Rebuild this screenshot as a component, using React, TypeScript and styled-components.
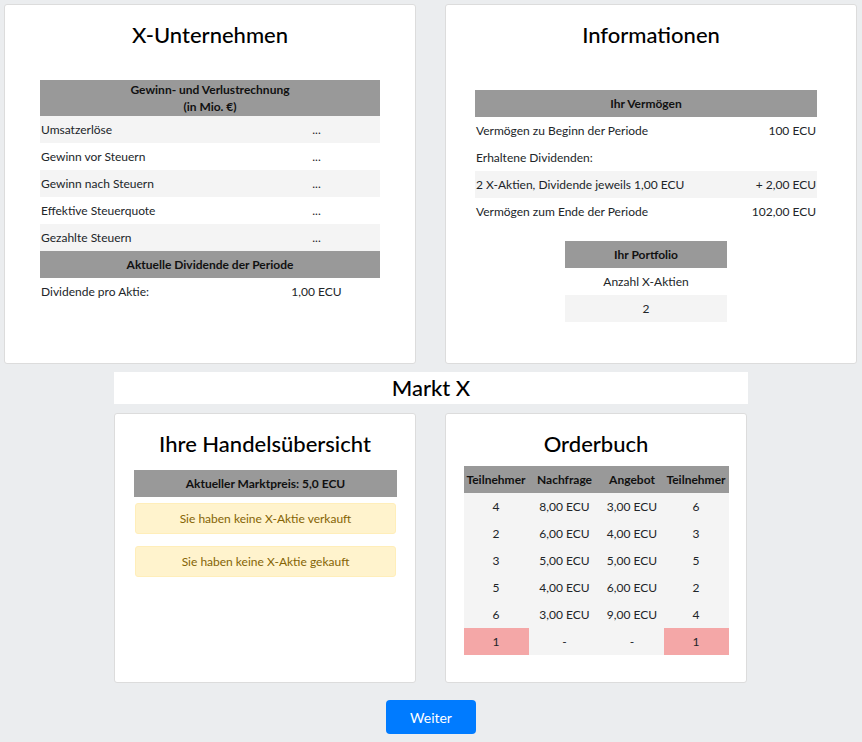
import styled, { createGlobalStyle } from "styled-components";

const GlobalStyle = createGlobalStyle`
  body {
    margin: 0;
    background: #ebedef;
    font-family: Lato, "Open Sans", sans-serif;
    font-size: 12px;
    color: #212529;
  }
`;

const orders = [
  { buyer: "4", bid: "8,00 ECU", ask: "3,00 ECU", seller: "6" },
  { buyer: "2", bid: "6,00 ECU", ask: "4,00 ECU", seller: "3" },
  { buyer: "3", bid: "5,00 ECU", ask: "5,00 ECU", seller: "5" },
  { buyer: "5", bid: "4,00 ECU", ask: "6,00 ECU", seller: "2" },
  { buyer: "6", bid: "3,00 ECU", ask: "9,00 ECU", seller: "4" },
];

const pnl = [
  "Umsatzerlöse",
  "Gewinn vor Steuern",
  "Gewinn nach Steuern",
  "Effektive Steuerquote",
  "Gezahlte Steuern",
];

export default function App() {
  return (
    <Page>
      <GlobalStyle />
      <TopRow>
        <Card $height={360}>
          <CardTitle>X-Unternehmen</CardTitle>
          <DataTable $width={340} $top={32}>
            <colgroup>
              <Col />
              <Col $width={127} />
            </colgroup>
            <tbody>
              <tr>
                <HeadCell colSpan={2} $tall>
                  Gewinn- und Verlustrechnung
                  <br />
                  (in Mio. €)
                </HeadCell>
              </tr>
              {pnl.map((label, i) => (
                <Row key={label} $shaded={i % 2 === 0}>
                  <Cell>{label}</Cell>
                  <Cell $align="center">...</Cell>
                </Row>
              ))}
              <tr>
                <HeadCell colSpan={2}>Aktuelle Dividende der Periode</HeadCell>
              </tr>
              <Row>
                <Cell>Dividende pro Aktie:</Cell>
                <Cell $align="center">1,00 ECU</Cell>
              </Row>
            </tbody>
          </DataTable>
        </Card>

        <Card $height={360}>
          <CardTitle>Informationen</CardTitle>
          <InfoBody>
            <DataTable $width={342} $top={42}>
              <tbody>
                <tr>
                  <HeadCell colSpan={2}>Ihr Vermögen</HeadCell>
                </tr>
                <Row>
                  <Cell>Vermögen zu Beginn der Periode</Cell>
                  <Cell $align="right">100 ECU</Cell>
                </Row>
                <Row>
                  <Cell>Erhaltene Dividenden:</Cell>
                  <Cell />
                </Row>
                <Row $shaded>
                  <Cell>2 X-Aktien, Dividende jeweils 1,00 ECU</Cell>
                  <Cell $align="right">+ 2,00 ECU</Cell>
                </Row>
                <Row>
                  <Cell>Vermögen zum Ende der Periode</Cell>
                  <Cell $align="right">102,00 ECU</Cell>
                </Row>
              </tbody>
            </DataTable>
            <DataTable $width={162} $top={16}>
              <tbody>
                <tr>
                  <HeadCell>Ihr Portfolio</HeadCell>
                </tr>
                <Row>
                  <Cell $align="center">Anzahl X-Aktien</Cell>
                </Row>
                <Row $shaded>
                  <Cell $align="center">2</Cell>
                </Row>
              </tbody>
            </DataTable>
          </InfoBody>
        </Card>
      </TopRow>

      <Market>
        <MarketBanner>Markt X</MarketBanner>
        <BottomRow>
          <Card $height={270}>
            <CardTitle>Ihre Handelsübersicht</CardTitle>
            <TradeBody>
              <PriceBar>Aktueller Marktpreis: 5,0 ECU</PriceBar>
              <Alert>Sie haben keine X-Aktie verkauft</Alert>
              <Alert>Sie haben keine X-Aktie gekauft</Alert>
            </TradeBody>
          </Card>

          <Card $height={270}>
            <CardTitle>Orderbuch</CardTitle>
            <DataTable $width={265} $top={9}>
              <colgroup>
                <Col $width={65} />
                <Col $width={72} />
                <Col $width={63} />
                <Col $width={65} />
              </colgroup>
              <thead>
                <tr>
                  <HeadCell>Teilnehmer</HeadCell>
                  <HeadCell>Nachfrage</HeadCell>
                  <HeadCell>Angebot</HeadCell>
                  <HeadCell>Teilnehmer</HeadCell>
                </tr>
              </thead>
              <tbody>
                {orders.map((o) => (
                  <Row key={o.buyer} $shaded>
                    <Cell $align="center">{o.buyer}</Cell>
                    <Cell $align="center">{o.bid}</Cell>
                    <Cell $align="center">{o.ask}</Cell>
                    <Cell $align="center">{o.seller}</Cell>
                  </Row>
                ))}
                <Row $shaded>
                  <Cell $align="center" $own>
                    1
                  </Cell>
                  <Cell $align="center">-</Cell>
                  <Cell $align="center">-</Cell>
                  <Cell $align="center" $own>
                    1
                  </Cell>
                </Row>
              </tbody>
            </DataTable>
          </Card>
        </BottomRow>
      </Market>

      <Footer>
        <NextButton type="button">Weiter</NextButton>
      </Footer>
    </Page>
  );
}

const Page = styled.div`
  padding: 4px 4px 8px;
  display: flex;
  flex-direction: column;
`;

const TopRow = styled.div`
  display: grid;
  grid-template-columns: 412px 412px;
  column-gap: 29px;
`;

const Card = styled.div<{ $height: number }>`
  box-sizing: border-box;
  height: ${(p) => p.$height}px;
  background: #fff;
  border: 1px solid #dcdcdc;
  border-radius: 3px;
  padding-top: 17px;
`;

const CardTitle = styled.h3`
  margin: 0;
  font-size: 22px;
  line-height: 26px;
  font-weight: 500;
  color: #000;
  text-align: center;
`;

const InfoBody = styled.div`
  padding: 0 10px 0 0;
`;

const DataTable = styled.table<{ $width: number; $top: number }>`
  width: ${(p) => p.$width}px;
  margin: ${(p) => p.$top}px auto 0;
  border-collapse: collapse;
  table-layout: fixed;
`;

const Col = styled.col<{ $width?: number }>`
  ${(p) => (p.$width ? `width: ${p.$width}px;` : "")}
`;

const HeadCell = styled.th<{ $tall?: boolean }>`
  background: #999999;
  color: #111;
  font-weight: 700;
  font-size: 12px;
  line-height: 17px;
  height: ${(p) => (p.$tall ? 36 : 27)}px;
  padding: 0;
  text-align: center;
  white-space: nowrap;
`;

const Row = styled.tr<{ $shaded?: boolean }>`
  background: ${(p) => (p.$shaded ? "#f4f4f4" : "#fff")};
`;

const Cell = styled.td<{
  $align?: "left" | "center" | "right";
  $own?: boolean;
}>`
  height: 27px;
  padding: 0 1px;
  line-height: 17px;
  text-align: ${(p) => p.$align ?? "left"};
  white-space: nowrap;
  ${(p) => (p.$own ? "background: #f4a7a7;" : "")}
`;

const Market = styled.div`
  width: 634px;
  margin: 8px auto 0;
  display: flex;
  flex-direction: column;
  gap: 9px;
`;

const MarketBanner = styled.h3`
  margin: 0;
  height: 32px;
  line-height: 32px;
  background: #fff;
  font-size: 22px;
  font-weight: 500;
  color: #000;
  text-align: center;
`;

const BottomRow = styled.div`
  display: grid;
  grid-template-columns: 302px 302px;
  column-gap: 29px;
`;

const TradeBody = styled.div`
  padding: 13px 18px 0 19px;
  display: flex;
  flex-direction: column;
`;

const PriceBar = styled.div`
  height: 27px;
  line-height: 27px;
  background: #999999;
  color: #111;
  font-weight: 700;
  text-align: center;
  margin-bottom: 6px;
`;

const Alert = styled.div`
  box-sizing: border-box;
  margin: 0 1px 12px;
  height: 31px;
  line-height: 29px;
  background: #fff3cd;
  border: 1px solid #ffeeba;
  border-radius: 3px;
  color: #856404;
  text-align: center;
`;

const Footer = styled.div`
  display: flex;
  justify-content: center;
  margin-top: 17px;
`;

const NextButton = styled.button`
  width: 90px;
  height: 34px;
  border: none;
  border-radius: 4px;
  background: #007bff;
  color: #fff;
  font-family: Lato, "Open Sans", sans-serif;
  font-size: 14px;
  cursor: pointer;
`;
